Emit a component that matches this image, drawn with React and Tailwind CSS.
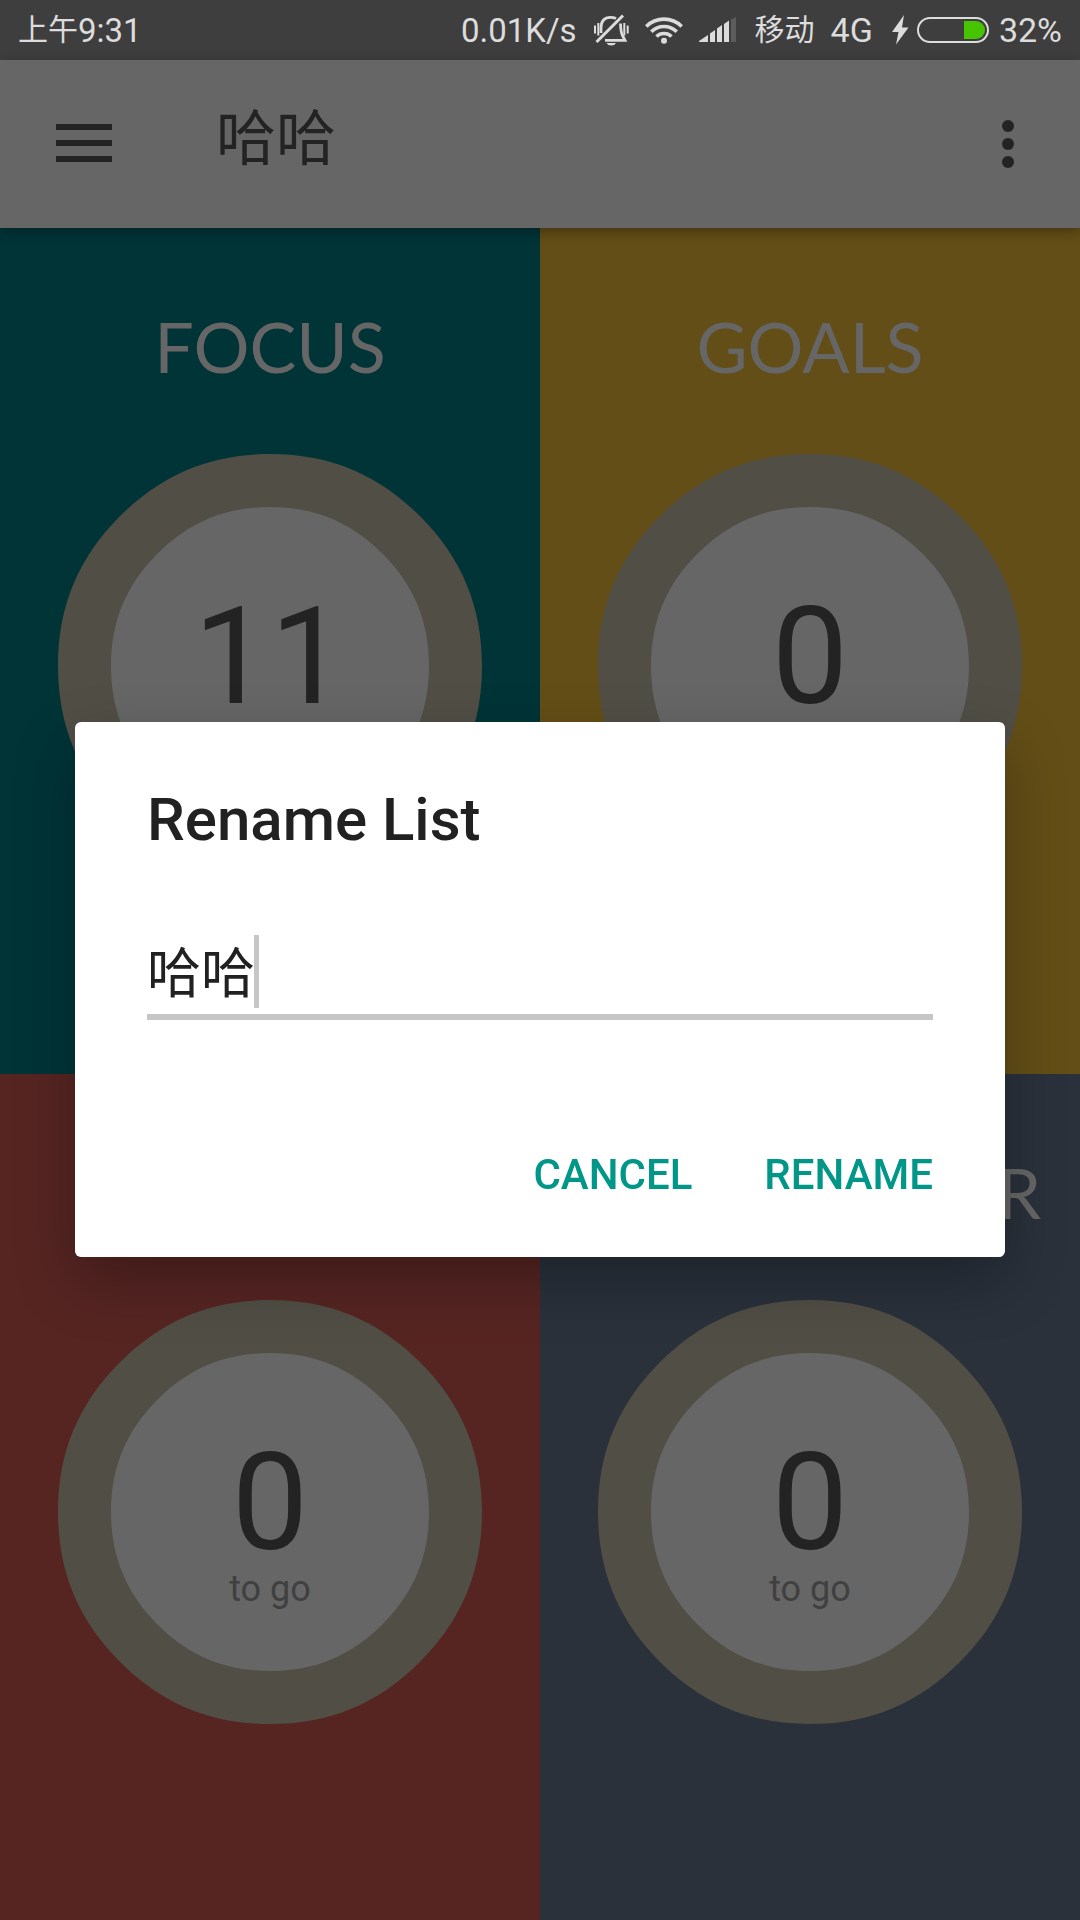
const TILES = [
  { title: "FOCUS", count: 11, bg: "bg-[#003437]", ring: "text-[#514e46]" },
  { title: "GOALS", count: 0, bg: "bg-[#634e17]", ring: "text-[#514e46]" },
  { title: "FIT IN", count: 0, bg: "bg-[#562522]", ring: "text-[#504e45]" },
  { title: "BACKBURNER", count: 0, bg: "bg-[#2a313b]", ring: "text-[#514e46]" },
];

// A softened circle of radius 212, drawn one octant at a time.
const DISC =
  "M212 0C212 59.400 191.900 107.900 149.900 149.900C107.900 191.900 59.400 212 0 212C-59.400 212 -107.900 191.900 -149.900 149.900C-191.900 107.900 -212 59.400 -212 0C-212 -59.400 -191.900 -107.900 -149.900 -149.900C-107.900 -191.900 -59.400 -212 0 -212C59.400 -212 107.900 -191.900 149.900 -149.900C191.900 -107.900 212 -59.400 212 0Z";

function MutedBell() {
  return (
    <svg className="h-8 w-9" viewBox="0 0 36 32" fill="none" stroke="#dcdcdc" aria-hidden="true">
      <path d="M8 19V14C8 7 11.500 3.300 17.500 3.300C20 3.300 21.500 3.700 23 4.500M27.500 9.500C27.700 15 28 19 29.500 21.500L32 26.300H12" strokeWidth="2.800" />
      <path d="M3.500 28L30 1.500" strokeWidth="3" />
      <path d="M13.500 29H23C22 30.700 20.500 31.500 18.200 31.500C16 31.500 14.500 30.700 13.500 29Z" fill="#dcdcdc" stroke="none" />
      <path d="M2 11.500V19.500M5.300 9V21.500M31.300 9V21.500M34.700 11.500V19.500" strokeWidth="2" />
    </svg>
  );
}

function Wifi() {
  return (
    <svg className="h-7 w-[38px]" viewBox="0 0 38 28" fill="none" stroke="#dcdcdc" strokeWidth="3.600" aria-hidden="true">
      <path d="M1.300 10.500A25 25 0 0 1 36.700 10.500" />
      <path d="M6.300 15.700A18 18 0 0 1 31.700 15.700" />
      <path d="M11.500 20.500A11 11 0 0 1 26.500 20.500" />
      <circle cx="19" cy="24.800" r="3" fill="#dcdcdc" stroke="none" />
    </svg>
  );
}

function Signal() {
  return (
    <svg className="h-[26px] w-[38px]" viewBox="0 0 38 26" fill="#dcdcdc" aria-hidden="true">
      <path d="M0 25V24L9 18V25Z" />
      <path d="M11 16.500L16 13V25H11Z" />
      <path d="M18 11.500L23 8V25H18Z" />
      <path d="M25 7L30 3.500V25H25Z" />
      <path d="M32 2.500L37 0V25H32Z" fill="#5c5c5c" />
    </svg>
  );
}

function Bolt() {
  return (
    <svg className="h-[30px] w-[18px]" viewBox="0 0 18 30" fill="#dcdcdc" aria-hidden="true">
      <path d="M13 0L1 17H7.500L5 29.500L17.500 12.500H11Z" />
    </svg>
  );
}

function Battery() {
  return (
    <svg className="h-[26px] w-[72px]" viewBox="0 0 72 26" aria-hidden="true">
      <rect x="1" y="1" width="70" height="24" rx="12" fill="none" stroke="#dcdcdc" strokeWidth="2" />
      <path d="M47 4H59A9 9 0 0 1 59 22H47Z" fill="#46c400" />
    </svg>
  );
}

function StatusBar() {
  return (
    <div className="flex h-[60px] items-center justify-between bg-[#3e3e3e] px-[18px] text-[33px] leading-none text-[#dcdcdc]">
      <span className="flex items-center">
        <span className="text-[30px]">上午</span>
        <span>9:31</span>
      </span>
      <div className="flex items-center">
        <span>0.01K/s</span>
        <span className="ml-4"><MutedBell /></span>
        <span className="ml-4"><Wifi /></span>
        <span className="ml-4"><Signal /></span>
        <span className="ml-[18px] text-[30px]">移动</span>
        <span className="ml-4 text-[34px]">4G</span>
        <span className="ml-[18px]"><Bolt /></span>
        <span className="ml-2"><Battery /></span>
        <span className="ml-[10px] text-[34px]">32%</span>
      </div>
    </div>
  );
}

function AppBar() {
  return (
    <header className="relative z-10 flex h-[168px] items-center bg-[#666666] px-14 text-[#232323] shadow-[0_4px_12px_rgba(0,0,0,0.3)]">
      <button type="button" aria-label="Open menu" className="flex w-14 flex-col gap-[10px] pb-[2px]">
        <span className="h-[6px] bg-[#232323]" />
        <span className="h-[6px] bg-[#232323]" />
        <span className="h-[6px] bg-[#232323]" />
      </button>
      <h1 className="ml-[104px] pb-2 text-[60px] leading-none">哈哈</h1>
      <button type="button" aria-label="More options" className="ml-auto flex w-8 flex-col items-center gap-[6px]">
        <span className="size-3 rounded-full bg-[#232323]" />
        <span className="size-3 rounded-full bg-[#232323]" />
        <span className="size-3 rounded-full bg-[#232323]" />
      </button>
    </header>
  );
}

function Tile({ title, count, bg, ring }) {
  return (
    <section className={`flex flex-col items-center pt-[74px] ${bg}`}>
      <h2 className="font-['Lato','Liberation_Sans',sans-serif] text-[70px] leading-[88px] text-[#666666]">{title}</h2>
      <div className="mt-16 grid size-[424px] place-items-center">
        <svg className={`col-start-1 row-start-1 size-full ${ring}`} viewBox="-212 -212 424 424" aria-hidden="true">
          <path d={DISC} fill="currentColor" />
          <path d={DISC} fill="#666666" transform="scale(0.75)" />
        </svg>
        <div className="col-start-1 row-start-1 flex flex-col items-center pt-6">
          <span className="text-[136px] leading-[130px] text-[#232323]">{count}</span>
          <span className="text-[36px] leading-[42px] text-[#404040]">to go</span>
        </div>
      </div>
    </section>
  );
}

function RenameDialog() {
  return (
    <div className="fixed inset-0 z-20 flex items-center justify-center px-[75px] pt-[59px]">
      <form
        role="dialog"
        aria-modal="true"
        aria-labelledby="rename-title"
        onSubmit={(e) => e.preventDefault()}
        className="w-full rounded-md bg-white px-[72px] pt-[62px] pb-[46px] shadow-[0_24px_60px_rgba(0,0,0,0.28)]"
      >
        <h2 id="rename-title" className="text-[60px] leading-[72px] font-medium text-[#212121]">Rename List</h2>
        <div className="relative mt-[79px] flex h-[85px] items-start border-b-[6px] border-[#c6c6c6]">
          <input
            aria-labelledby="rename-title"
            defaultValue="哈哈"
            className="h-[74px] w-full bg-transparent pt-1 text-[54px] text-[#212121] outline-none"
          />
          <span className="absolute left-[107px] h-[73px] w-[5px] bg-[#c6c6c6]" />
        </div>
        <div className="mt-[119px] flex justify-end gap-[72px] text-[42px] leading-[72px] font-medium text-[#009688]">
          <button type="button">CANCEL</button>
          <button type="submit">RENAME</button>
        </div>
      </form>
    </div>
  );
}

export default function App() {
  return (
    <div className="flex min-h-screen flex-col font-['Roboto','Noto_Sans_CJK_SC',sans-serif]">
      <StatusBar />
      <AppBar />
      <main className="grid flex-1 grid-cols-2 grid-rows-2">
        {TILES.map((tile) => (
          <Tile key={tile.title} {...tile} />
        ))}
      </main>
      <RenameDialog />
    </div>
  );
}
